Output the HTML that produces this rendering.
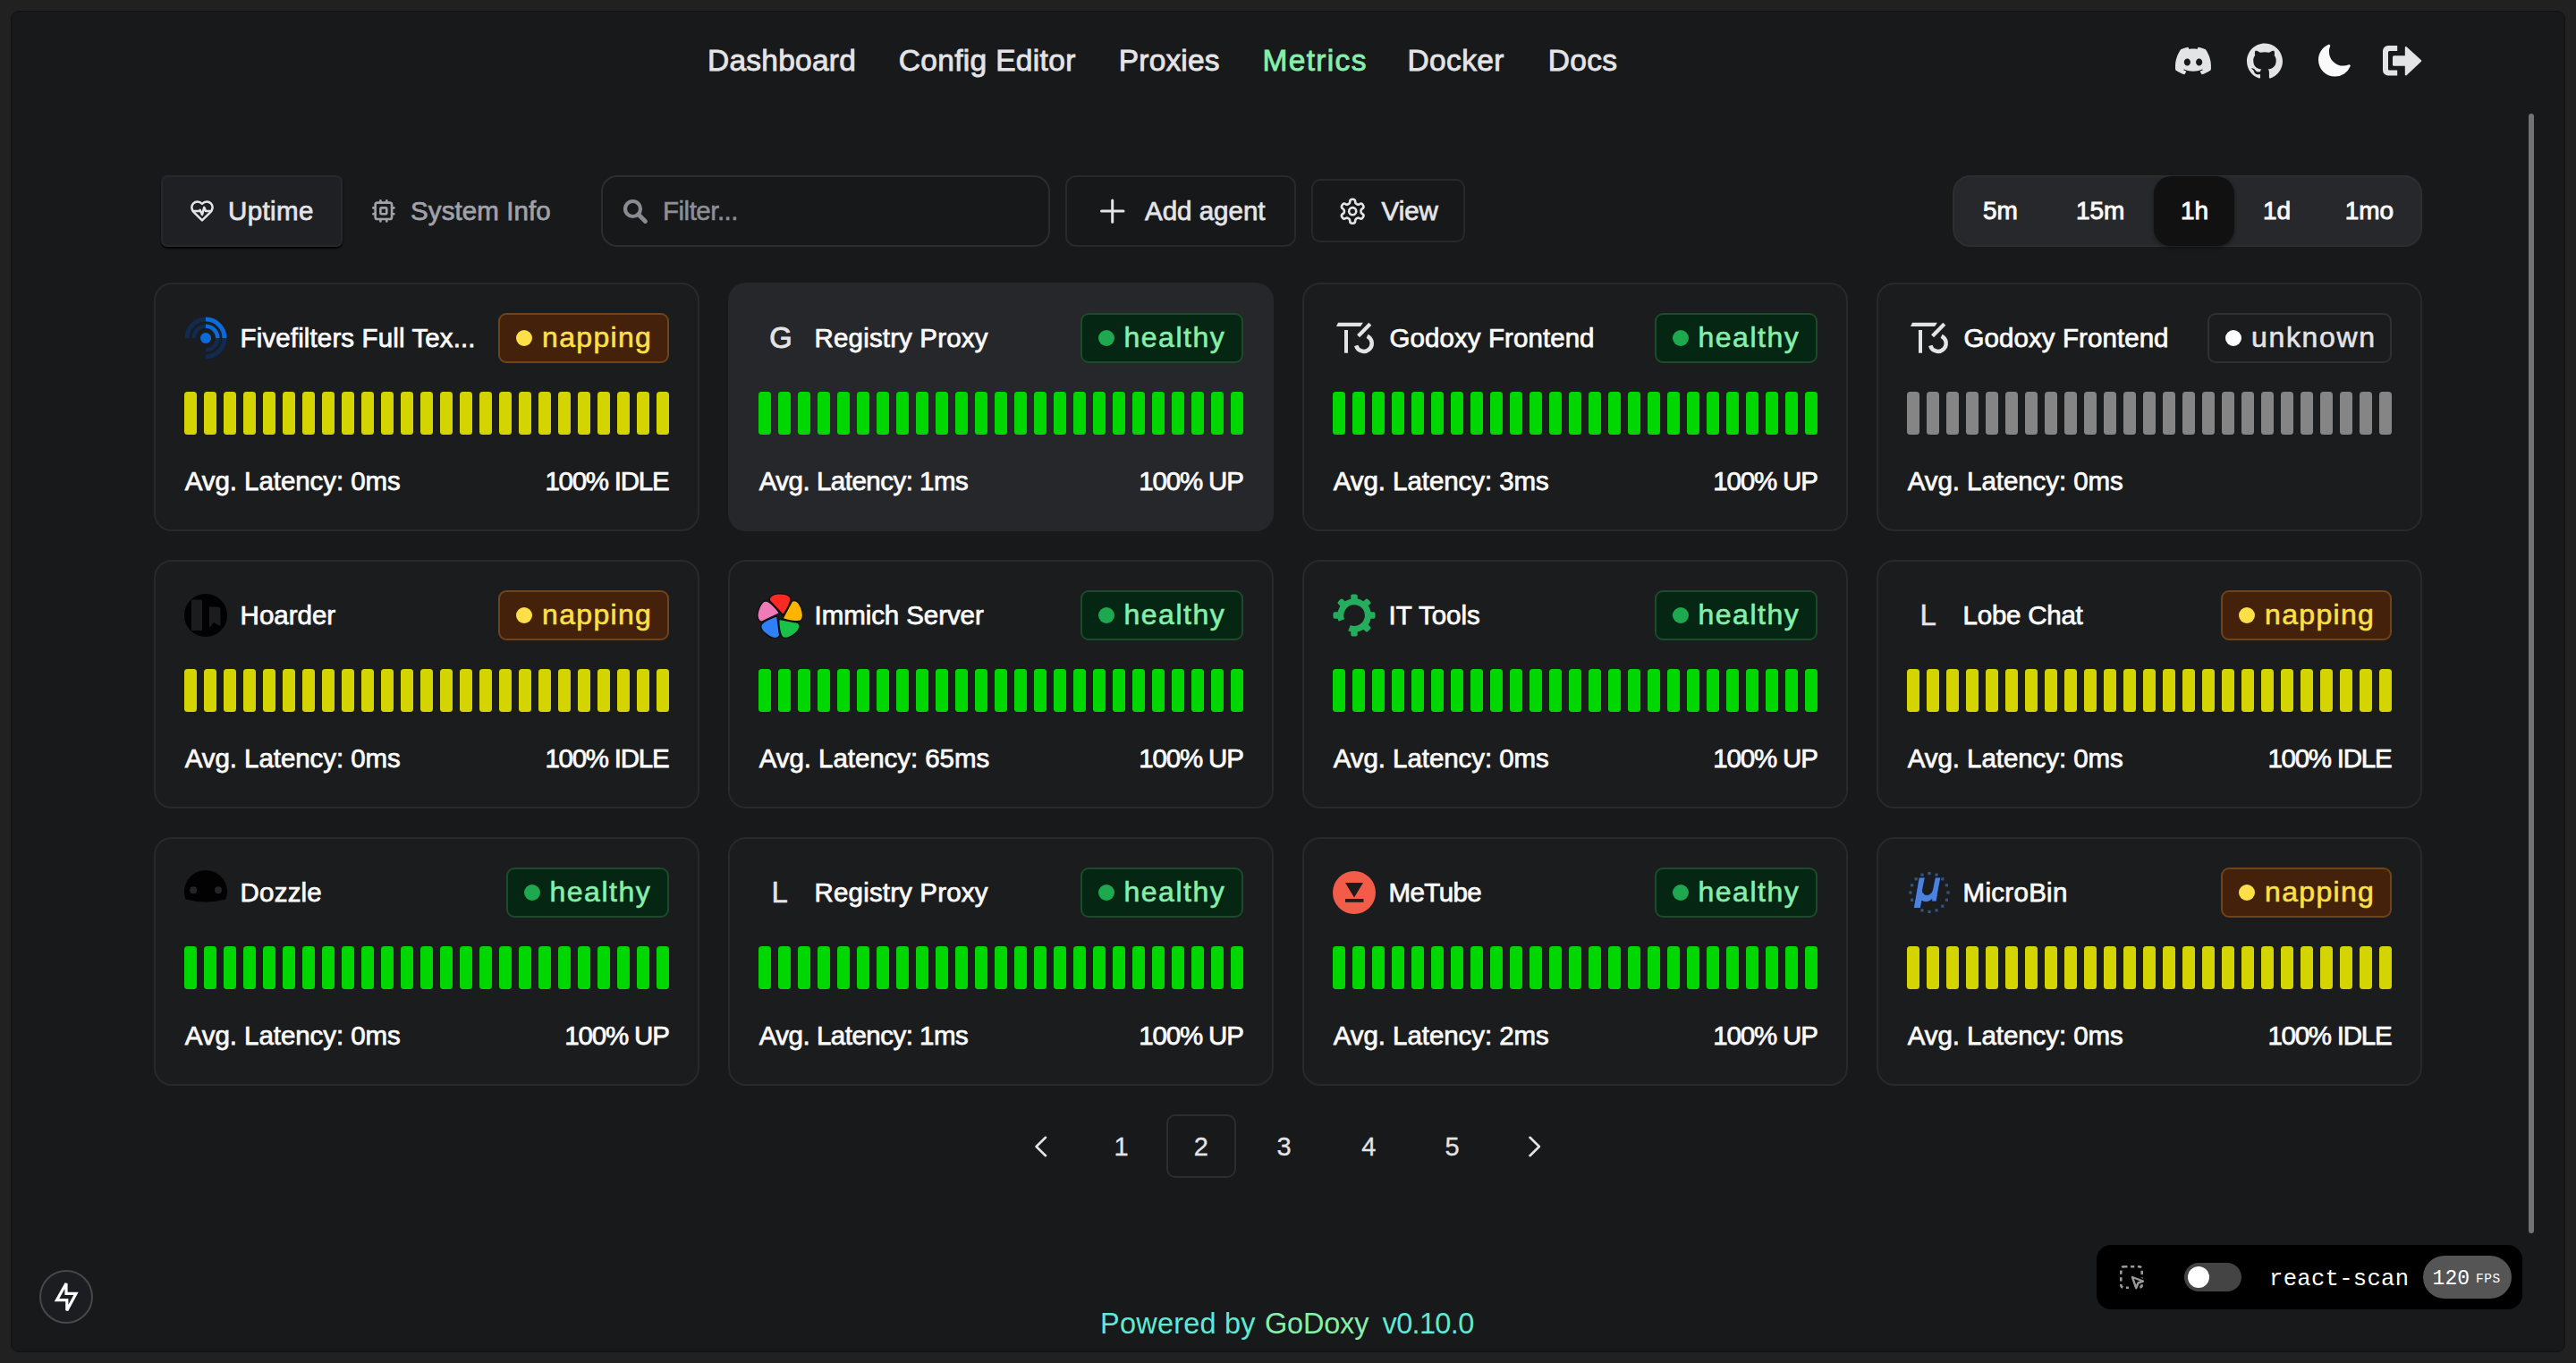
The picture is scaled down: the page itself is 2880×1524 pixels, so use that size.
<!DOCTYPE html><html><head><meta charset='utf-8'><style>
html,body{margin:0;padding:0;width:2880px;height:1524px;overflow:hidden;background:#212121;font-family:"Liberation Sans",sans-serif;}
.t{position:absolute;line-height:1;white-space:nowrap;}
.a{position:absolute;box-sizing:border-box;}
svg{position:absolute;overflow:visible;}

</style></head><body>
<div class='a' style='left:12px;top:12px;width:2856px;height:1500px;background:#18191b;border-radius:9px;box-shadow:inset 0 0 2px 1px rgba(0,0,0,0.3);'></div>
<div class='a' style='left:180px;top:196px;width:203px;height:80px;background:#1f2023;border:2px solid #27282b;border-radius:7px;box-shadow:0 2px 2px rgba(0,0,0,0.85);'></div>
<div class='a' style='left:672px;top:196px;width:502px;height:80px;background:#17181a;border:2px solid #2c2d30;border-radius:18px;'></div>
<div class='a' style='left:1191px;top:196px;width:258px;height:80px;background:#17181a;border:2px solid #29292c;border-radius:12px;'></div>
<div class='a' style='left:1466px;top:200px;width:172px;height:71px;background:#17181a;border:2px solid #28282b;border-radius:10px;'></div>
<div class='a' style='left:2183px;top:196px;width:525px;height:80px;background:#27282b;border:2px solid #2d2e31;border-radius:20px;'></div>
<div class='a' style='left:2408px;top:197px;width:90px;height:78px;background:#111112;border-radius:20px;box-shadow:0 2px 4px rgba(0,0,0,0.4);'></div>
<div class='a' style='left:172px;top:316px;width:610px;height:278px;background:#1b1c1e;border:2px solid #28292c;border-radius:20px;'></div>
<svg style='left:206px;top:438px' width='542' height='48' viewBox='0 0 542 48'><rect x='0' y='0' width='14' height='48' rx='3.5' fill='#d4d400'/><rect x='22' y='0' width='14' height='48' rx='3.5' fill='#d4d400'/><rect x='44' y='0' width='14' height='48' rx='3.5' fill='#d4d400'/><rect x='66' y='0' width='14' height='48' rx='3.5' fill='#d4d400'/><rect x='88' y='0' width='14' height='48' rx='3.5' fill='#d4d400'/><rect x='110' y='0' width='14' height='48' rx='3.5' fill='#d4d400'/><rect x='132' y='0' width='14' height='48' rx='3.5' fill='#d4d400'/><rect x='154' y='0' width='14' height='48' rx='3.5' fill='#d4d400'/><rect x='176' y='0' width='14' height='48' rx='3.5' fill='#d4d400'/><rect x='198' y='0' width='14' height='48' rx='3.5' fill='#d4d400'/><rect x='220' y='0' width='14' height='48' rx='3.5' fill='#d4d400'/><rect x='242' y='0' width='14' height='48' rx='3.5' fill='#d4d400'/><rect x='264' y='0' width='14' height='48' rx='3.5' fill='#d4d400'/><rect x='286' y='0' width='14' height='48' rx='3.5' fill='#d4d400'/><rect x='308' y='0' width='14' height='48' rx='3.5' fill='#d4d400'/><rect x='330' y='0' width='14' height='48' rx='3.5' fill='#d4d400'/><rect x='352' y='0' width='14' height='48' rx='3.5' fill='#d4d400'/><rect x='374' y='0' width='14' height='48' rx='3.5' fill='#d4d400'/><rect x='396' y='0' width='14' height='48' rx='3.5' fill='#d4d400'/><rect x='418' y='0' width='14' height='48' rx='3.5' fill='#d4d400'/><rect x='440' y='0' width='14' height='48' rx='3.5' fill='#d4d400'/><rect x='462' y='0' width='14' height='48' rx='3.5' fill='#d4d400'/><rect x='484' y='0' width='14' height='48' rx='3.5' fill='#d4d400'/><rect x='506' y='0' width='14' height='48' rx='3.5' fill='#d4d400'/><rect x='528' y='0' width='14' height='48' rx='3.5' fill='#d4d400'/></svg>
<div class='a' style='left:557px;top:350px;width:191px;height:56px;background:#43210a;border:2px solid #70431a;border-radius:9px;'></div>
<div class='a' style='left:577px;top:369px;width:18px;height:18px;background:#fde047;border-radius:50%;'></div>
<svg style='left:206px;top:354px;' width='48' height='48' viewBox='0 0 48 48'><circle cx='24' cy='24' r='6' fill='#0c6bdb'/><g fill='none' stroke-width='4.6'><path d='M24 10.7 A13.3 13.3 0 0 1 37.3 24' stroke='#0c6bdb'/><path d='M10.7 24 A13.3 13.3 0 0 1 24 10.7' stroke='#132a50'/><path d='M37.3 24 A13.3 13.3 0 0 1 24 37.3' stroke='#132a50'/></g><g fill='none' stroke-width='5'><path d='M24 3 A21 21 0 0 1 45 24' stroke='#0c6bdb'/><path d='M3 24 A21 21 0 0 1 24 3' stroke='#132a50'/><path d='M45 24 A21 21 0 0 1 24 45' stroke='#132a50'/></g></svg>
<div class='a' style='left:814px;top:316px;width:610px;height:278px;background:#26272b;border-radius:20px;'></div>
<svg style='left:848px;top:438px' width='542' height='48' viewBox='0 0 542 48'><rect x='0' y='0' width='14' height='48' rx='3.5' fill='#00d600'/><rect x='22' y='0' width='14' height='48' rx='3.5' fill='#00d600'/><rect x='44' y='0' width='14' height='48' rx='3.5' fill='#00d600'/><rect x='66' y='0' width='14' height='48' rx='3.5' fill='#00d600'/><rect x='88' y='0' width='14' height='48' rx='3.5' fill='#00d600'/><rect x='110' y='0' width='14' height='48' rx='3.5' fill='#00d600'/><rect x='132' y='0' width='14' height='48' rx='3.5' fill='#00d600'/><rect x='154' y='0' width='14' height='48' rx='3.5' fill='#00d600'/><rect x='176' y='0' width='14' height='48' rx='3.5' fill='#00d600'/><rect x='198' y='0' width='14' height='48' rx='3.5' fill='#00d600'/><rect x='220' y='0' width='14' height='48' rx='3.5' fill='#00d600'/><rect x='242' y='0' width='14' height='48' rx='3.5' fill='#00d600'/><rect x='264' y='0' width='14' height='48' rx='3.5' fill='#00d600'/><rect x='286' y='0' width='14' height='48' rx='3.5' fill='#00d600'/><rect x='308' y='0' width='14' height='48' rx='3.5' fill='#00d600'/><rect x='330' y='0' width='14' height='48' rx='3.5' fill='#00d600'/><rect x='352' y='0' width='14' height='48' rx='3.5' fill='#00d600'/><rect x='374' y='0' width='14' height='48' rx='3.5' fill='#00d600'/><rect x='396' y='0' width='14' height='48' rx='3.5' fill='#00d600'/><rect x='418' y='0' width='14' height='48' rx='3.5' fill='#00d600'/><rect x='440' y='0' width='14' height='48' rx='3.5' fill='#00d600'/><rect x='462' y='0' width='14' height='48' rx='3.5' fill='#00d600'/><rect x='484' y='0' width='14' height='48' rx='3.5' fill='#00d600'/><rect x='506' y='0' width='14' height='48' rx='3.5' fill='#00d600'/><rect x='528' y='0' width='14' height='48' rx='3.5' fill='#00d600'/></svg>
<div class='a' style='left:1207.5px;top:350px;width:182.5px;height:56px;background:#042613;border:2px solid #1d4a2b;border-radius:9px;'></div>
<div class='a' style='left:1227.5px;top:369px;width:18px;height:18px;background:#1ea84f;border-radius:50%;'></div>
<div class='t' style='left:860.2px;top:361.81705px;font-size:32.7px;color:#e4e4e7;-webkit-text-stroke:0.9px #e4e4e7'>G</div>
<div class='a' style='left:1456px;top:316px;width:610px;height:278px;background:#1b1c1e;border:2px solid #28292c;border-radius:20px;'></div>
<svg style='left:1490px;top:438px' width='542' height='48' viewBox='0 0 542 48'><rect x='0' y='0' width='14' height='48' rx='3.5' fill='#00d600'/><rect x='22' y='0' width='14' height='48' rx='3.5' fill='#00d600'/><rect x='44' y='0' width='14' height='48' rx='3.5' fill='#00d600'/><rect x='66' y='0' width='14' height='48' rx='3.5' fill='#00d600'/><rect x='88' y='0' width='14' height='48' rx='3.5' fill='#00d600'/><rect x='110' y='0' width='14' height='48' rx='3.5' fill='#00d600'/><rect x='132' y='0' width='14' height='48' rx='3.5' fill='#00d600'/><rect x='154' y='0' width='14' height='48' rx='3.5' fill='#00d600'/><rect x='176' y='0' width='14' height='48' rx='3.5' fill='#00d600'/><rect x='198' y='0' width='14' height='48' rx='3.5' fill='#00d600'/><rect x='220' y='0' width='14' height='48' rx='3.5' fill='#00d600'/><rect x='242' y='0' width='14' height='48' rx='3.5' fill='#00d600'/><rect x='264' y='0' width='14' height='48' rx='3.5' fill='#00d600'/><rect x='286' y='0' width='14' height='48' rx='3.5' fill='#00d600'/><rect x='308' y='0' width='14' height='48' rx='3.5' fill='#00d600'/><rect x='330' y='0' width='14' height='48' rx='3.5' fill='#00d600'/><rect x='352' y='0' width='14' height='48' rx='3.5' fill='#00d600'/><rect x='374' y='0' width='14' height='48' rx='3.5' fill='#00d600'/><rect x='396' y='0' width='14' height='48' rx='3.5' fill='#00d600'/><rect x='418' y='0' width='14' height='48' rx='3.5' fill='#00d600'/><rect x='440' y='0' width='14' height='48' rx='3.5' fill='#00d600'/><rect x='462' y='0' width='14' height='48' rx='3.5' fill='#00d600'/><rect x='484' y='0' width='14' height='48' rx='3.5' fill='#00d600'/><rect x='506' y='0' width='14' height='48' rx='3.5' fill='#00d600'/><rect x='528' y='0' width='14' height='48' rx='3.5' fill='#00d600'/></svg>
<div class='a' style='left:1849.5px;top:350px;width:182.5px;height:56px;background:#042613;border:2px solid #1d4a2b;border-radius:9px;'></div>
<div class='a' style='left:1869.5px;top:369px;width:18px;height:18px;background:#1ea84f;border-radius:50%;'></div>
<svg style='left:1490px;top:354px;' width='48' height='48' viewBox='0 0 48 48'><path d='M6 6.8 H33.9 L31.1 11 H4 Z' fill='#e4e4e7'/><rect x='13' y='15' width='4' height='25.7' fill='#e4e4e7'/><path d='M41.8 8.3 L28.6 21.7' stroke='#e4e4e7' stroke-width='4.2'/><path d='M38.56 21.9 A8.9 8.9 0 1 1 26.2 32.3' fill='none' stroke='#e4e4e7' stroke-width='4.5'/></svg>
<div class='a' style='left:2098px;top:316px;width:610px;height:278px;background:#1b1c1e;border:2px solid #28292c;border-radius:20px;'></div>
<svg style='left:2132px;top:438px' width='542' height='48' viewBox='0 0 542 48'><rect x='0' y='0' width='14' height='48' rx='3.5' fill='#858585'/><rect x='22' y='0' width='14' height='48' rx='3.5' fill='#858585'/><rect x='44' y='0' width='14' height='48' rx='3.5' fill='#858585'/><rect x='66' y='0' width='14' height='48' rx='3.5' fill='#858585'/><rect x='88' y='0' width='14' height='48' rx='3.5' fill='#858585'/><rect x='110' y='0' width='14' height='48' rx='3.5' fill='#858585'/><rect x='132' y='0' width='14' height='48' rx='3.5' fill='#858585'/><rect x='154' y='0' width='14' height='48' rx='3.5' fill='#858585'/><rect x='176' y='0' width='14' height='48' rx='3.5' fill='#858585'/><rect x='198' y='0' width='14' height='48' rx='3.5' fill='#858585'/><rect x='220' y='0' width='14' height='48' rx='3.5' fill='#858585'/><rect x='242' y='0' width='14' height='48' rx='3.5' fill='#858585'/><rect x='264' y='0' width='14' height='48' rx='3.5' fill='#858585'/><rect x='286' y='0' width='14' height='48' rx='3.5' fill='#858585'/><rect x='308' y='0' width='14' height='48' rx='3.5' fill='#858585'/><rect x='330' y='0' width='14' height='48' rx='3.5' fill='#858585'/><rect x='352' y='0' width='14' height='48' rx='3.5' fill='#858585'/><rect x='374' y='0' width='14' height='48' rx='3.5' fill='#858585'/><rect x='396' y='0' width='14' height='48' rx='3.5' fill='#858585'/><rect x='418' y='0' width='14' height='48' rx='3.5' fill='#858585'/><rect x='440' y='0' width='14' height='48' rx='3.5' fill='#858585'/><rect x='462' y='0' width='14' height='48' rx='3.5' fill='#858585'/><rect x='484' y='0' width='14' height='48' rx='3.5' fill='#858585'/><rect x='506' y='0' width='14' height='48' rx='3.5' fill='#858585'/><rect x='528' y='0' width='14' height='48' rx='3.5' fill='#858585'/></svg>
<div class='a' style='left:2468px;top:350px;width:206px;height:56px;background:#1b1c1e;border:2px solid #2f3033;border-radius:9px;'></div>
<div class='a' style='left:2488px;top:369px;width:18px;height:18px;background:#ffffff;border-radius:50%;'></div>
<svg style='left:2132px;top:354px;' width='48' height='48' viewBox='0 0 48 48'><path d='M6 6.8 H33.9 L31.1 11 H4 Z' fill='#e4e4e7'/><rect x='13' y='15' width='4' height='25.7' fill='#e4e4e7'/><path d='M41.8 8.3 L28.6 21.7' stroke='#e4e4e7' stroke-width='4.2'/><path d='M38.56 21.9 A8.9 8.9 0 1 1 26.2 32.3' fill='none' stroke='#e4e4e7' stroke-width='4.5'/></svg>
<div class='a' style='left:172px;top:626px;width:610px;height:278px;background:#1b1c1e;border:2px solid #28292c;border-radius:20px;'></div>
<svg style='left:206px;top:748px' width='542' height='48' viewBox='0 0 542 48'><rect x='0' y='0' width='14' height='48' rx='3.5' fill='#d4d400'/><rect x='22' y='0' width='14' height='48' rx='3.5' fill='#d4d400'/><rect x='44' y='0' width='14' height='48' rx='3.5' fill='#d4d400'/><rect x='66' y='0' width='14' height='48' rx='3.5' fill='#d4d400'/><rect x='88' y='0' width='14' height='48' rx='3.5' fill='#d4d400'/><rect x='110' y='0' width='14' height='48' rx='3.5' fill='#d4d400'/><rect x='132' y='0' width='14' height='48' rx='3.5' fill='#d4d400'/><rect x='154' y='0' width='14' height='48' rx='3.5' fill='#d4d400'/><rect x='176' y='0' width='14' height='48' rx='3.5' fill='#d4d400'/><rect x='198' y='0' width='14' height='48' rx='3.5' fill='#d4d400'/><rect x='220' y='0' width='14' height='48' rx='3.5' fill='#d4d400'/><rect x='242' y='0' width='14' height='48' rx='3.5' fill='#d4d400'/><rect x='264' y='0' width='14' height='48' rx='3.5' fill='#d4d400'/><rect x='286' y='0' width='14' height='48' rx='3.5' fill='#d4d400'/><rect x='308' y='0' width='14' height='48' rx='3.5' fill='#d4d400'/><rect x='330' y='0' width='14' height='48' rx='3.5' fill='#d4d400'/><rect x='352' y='0' width='14' height='48' rx='3.5' fill='#d4d400'/><rect x='374' y='0' width='14' height='48' rx='3.5' fill='#d4d400'/><rect x='396' y='0' width='14' height='48' rx='3.5' fill='#d4d400'/><rect x='418' y='0' width='14' height='48' rx='3.5' fill='#d4d400'/><rect x='440' y='0' width='14' height='48' rx='3.5' fill='#d4d400'/><rect x='462' y='0' width='14' height='48' rx='3.5' fill='#d4d400'/><rect x='484' y='0' width='14' height='48' rx='3.5' fill='#d4d400'/><rect x='506' y='0' width='14' height='48' rx='3.5' fill='#d4d400'/><rect x='528' y='0' width='14' height='48' rx='3.5' fill='#d4d400'/></svg>
<div class='a' style='left:557px;top:660px;width:191px;height:56px;background:#43210a;border:2px solid #70431a;border-radius:9px;'></div>
<div class='a' style='left:577px;top:679px;width:18px;height:18px;background:#fde047;border-radius:50%;'></div>
<svg style='left:206px;top:664px;' width='48' height='48' viewBox='0 0 48 48'><circle cx='24' cy='24' r='24' fill='#020202'/><rect x='8' y='6.5' width='12' height='34.5' rx='1' fill='#1b1c1e'/><path d='M28 14.5 H37 A3.4 3.4 0 0 1 40.4 18 V36 L33 32 L28 38 Z' fill='#1b1c1e'/></svg>
<div class='a' style='left:814px;top:626px;width:610px;height:278px;background:#1b1c1e;border:2px solid #28292c;border-radius:20px;'></div>
<svg style='left:848px;top:748px' width='542' height='48' viewBox='0 0 542 48'><rect x='0' y='0' width='14' height='48' rx='3.5' fill='#00d600'/><rect x='22' y='0' width='14' height='48' rx='3.5' fill='#00d600'/><rect x='44' y='0' width='14' height='48' rx='3.5' fill='#00d600'/><rect x='66' y='0' width='14' height='48' rx='3.5' fill='#00d600'/><rect x='88' y='0' width='14' height='48' rx='3.5' fill='#00d600'/><rect x='110' y='0' width='14' height='48' rx='3.5' fill='#00d600'/><rect x='132' y='0' width='14' height='48' rx='3.5' fill='#00d600'/><rect x='154' y='0' width='14' height='48' rx='3.5' fill='#00d600'/><rect x='176' y='0' width='14' height='48' rx='3.5' fill='#00d600'/><rect x='198' y='0' width='14' height='48' rx='3.5' fill='#00d600'/><rect x='220' y='0' width='14' height='48' rx='3.5' fill='#00d600'/><rect x='242' y='0' width='14' height='48' rx='3.5' fill='#00d600'/><rect x='264' y='0' width='14' height='48' rx='3.5' fill='#00d600'/><rect x='286' y='0' width='14' height='48' rx='3.5' fill='#00d600'/><rect x='308' y='0' width='14' height='48' rx='3.5' fill='#00d600'/><rect x='330' y='0' width='14' height='48' rx='3.5' fill='#00d600'/><rect x='352' y='0' width='14' height='48' rx='3.5' fill='#00d600'/><rect x='374' y='0' width='14' height='48' rx='3.5' fill='#00d600'/><rect x='396' y='0' width='14' height='48' rx='3.5' fill='#00d600'/><rect x='418' y='0' width='14' height='48' rx='3.5' fill='#00d600'/><rect x='440' y='0' width='14' height='48' rx='3.5' fill='#00d600'/><rect x='462' y='0' width='14' height='48' rx='3.5' fill='#00d600'/><rect x='484' y='0' width='14' height='48' rx='3.5' fill='#00d600'/><rect x='506' y='0' width='14' height='48' rx='3.5' fill='#00d600'/><rect x='528' y='0' width='14' height='48' rx='3.5' fill='#00d600'/></svg>
<div class='a' style='left:1207.5px;top:660px;width:182.5px;height:56px;background:#042613;border:2px solid #1d4a2b;border-radius:9px;'></div>
<div class='a' style='left:1227.5px;top:679px;width:18px;height:18px;background:#1ea84f;border-radius:50%;'></div>
<svg style='left:848px;top:664px;' width='48' height='48' viewBox='0 0 48 48'><path transform='translate(24.3 25.2) rotate(0) scale(1.09) translate(-24.3 -25.2)' d='M27.2 23.6 L13.3 9 C 12.3 5.5 16 2.3 22 2 C 28 1.8 33.6 2.8 34.9 6.4 C 35.6 10 31.2 18.5 27.2 23.6 Z' fill='#fa2921' stroke='#0e0e10' stroke-width='1.2' stroke-linejoin='round'/><path transform='translate(24.3 25.2) rotate(72) scale(1.09) translate(-24.3 -25.2)' d='M27.2 23.6 L13.3 9 C 12.3 5.5 16 2.3 22 2 C 28 1.8 33.6 2.8 34.9 6.4 C 35.6 10 31.2 18.5 27.2 23.6 Z' fill='#ffb400' stroke='#0e0e10' stroke-width='1.2' stroke-linejoin='round'/><path transform='translate(24.3 25.2) rotate(144) scale(1.09) translate(-24.3 -25.2)' d='M27.2 23.6 L13.3 9 C 12.3 5.5 16 2.3 22 2 C 28 1.8 33.6 2.8 34.9 6.4 C 35.6 10 31.2 18.5 27.2 23.6 Z' fill='#18c249' stroke='#0e0e10' stroke-width='1.2' stroke-linejoin='round'/><path transform='translate(24.3 25.2) rotate(216) scale(1.09) translate(-24.3 -25.2)' d='M27.2 23.6 L13.3 9 C 12.3 5.5 16 2.3 22 2 C 28 1.8 33.6 2.8 34.9 6.4 C 35.6 10 31.2 18.5 27.2 23.6 Z' fill='#2f80f7' stroke='#0e0e10' stroke-width='1.2' stroke-linejoin='round'/><path transform='translate(24.3 25.2) rotate(288) scale(1.09) translate(-24.3 -25.2)' d='M27.2 23.6 L13.3 9 C 12.3 5.5 16 2.3 22 2 C 28 1.8 33.6 2.8 34.9 6.4 C 35.6 10 31.2 18.5 27.2 23.6 Z' fill='#ee7bb8' stroke='#0e0e10' stroke-width='1.2' stroke-linejoin='round'/></svg>
<div class='a' style='left:1456px;top:626px;width:610px;height:278px;background:#1b1c1e;border:2px solid #28292c;border-radius:20px;'></div>
<svg style='left:1490px;top:748px' width='542' height='48' viewBox='0 0 542 48'><rect x='0' y='0' width='14' height='48' rx='3.5' fill='#00d600'/><rect x='22' y='0' width='14' height='48' rx='3.5' fill='#00d600'/><rect x='44' y='0' width='14' height='48' rx='3.5' fill='#00d600'/><rect x='66' y='0' width='14' height='48' rx='3.5' fill='#00d600'/><rect x='88' y='0' width='14' height='48' rx='3.5' fill='#00d600'/><rect x='110' y='0' width='14' height='48' rx='3.5' fill='#00d600'/><rect x='132' y='0' width='14' height='48' rx='3.5' fill='#00d600'/><rect x='154' y='0' width='14' height='48' rx='3.5' fill='#00d600'/><rect x='176' y='0' width='14' height='48' rx='3.5' fill='#00d600'/><rect x='198' y='0' width='14' height='48' rx='3.5' fill='#00d600'/><rect x='220' y='0' width='14' height='48' rx='3.5' fill='#00d600'/><rect x='242' y='0' width='14' height='48' rx='3.5' fill='#00d600'/><rect x='264' y='0' width='14' height='48' rx='3.5' fill='#00d600'/><rect x='286' y='0' width='14' height='48' rx='3.5' fill='#00d600'/><rect x='308' y='0' width='14' height='48' rx='3.5' fill='#00d600'/><rect x='330' y='0' width='14' height='48' rx='3.5' fill='#00d600'/><rect x='352' y='0' width='14' height='48' rx='3.5' fill='#00d600'/><rect x='374' y='0' width='14' height='48' rx='3.5' fill='#00d600'/><rect x='396' y='0' width='14' height='48' rx='3.5' fill='#00d600'/><rect x='418' y='0' width='14' height='48' rx='3.5' fill='#00d600'/><rect x='440' y='0' width='14' height='48' rx='3.5' fill='#00d600'/><rect x='462' y='0' width='14' height='48' rx='3.5' fill='#00d600'/><rect x='484' y='0' width='14' height='48' rx='3.5' fill='#00d600'/><rect x='506' y='0' width='14' height='48' rx='3.5' fill='#00d600'/><rect x='528' y='0' width='14' height='48' rx='3.5' fill='#00d600'/></svg>
<div class='a' style='left:1849.5px;top:660px;width:182.5px;height:56px;background:#042613;border:2px solid #1d4a2b;border-radius:9px;'></div>
<div class='a' style='left:1869.5px;top:679px;width:18px;height:18px;background:#1ea84f;border-radius:50%;'></div>
<svg style='left:1490px;top:664px;' width='48' height='48' viewBox='0 0 48 48'><rect x='20.3' y='0.5' width='7.4' height='9' rx='1.8' transform='rotate(0 24 24)' fill='#23ad5c'/><rect x='20.3' y='0.5' width='7.4' height='9' rx='1.8' transform='rotate(45 24 24)' fill='#23ad5c'/><rect x='20.3' y='0.5' width='7.4' height='9' rx='1.8' transform='rotate(90 24 24)' fill='#23ad5c'/><rect x='20.3' y='0.5' width='7.4' height='9' rx='1.8' transform='rotate(135 24 24)' fill='#23ad5c'/><rect x='20.3' y='0.5' width='7.4' height='9' rx='1.8' transform='rotate(180 24 24)' fill='#23ad5c'/><rect x='20.3' y='0.5' width='7.4' height='9' rx='1.8' transform='rotate(270 24 24)' fill='#23ad5c'/><rect x='20.3' y='0.5' width='7.4' height='9' rx='1.8' transform='rotate(315 24 24)' fill='#23ad5c'/><path d='M9.8 29.5 A15.3 15.3 0 1 1 18.5 38.3' fill='none' stroke='#23ad5c' stroke-width='7'/></svg>
<div class='a' style='left:2098px;top:626px;width:610px;height:278px;background:#1b1c1e;border:2px solid #28292c;border-radius:20px;'></div>
<svg style='left:2132px;top:748px' width='542' height='48' viewBox='0 0 542 48'><rect x='0' y='0' width='14' height='48' rx='3.5' fill='#d4d400'/><rect x='22' y='0' width='14' height='48' rx='3.5' fill='#d4d400'/><rect x='44' y='0' width='14' height='48' rx='3.5' fill='#d4d400'/><rect x='66' y='0' width='14' height='48' rx='3.5' fill='#d4d400'/><rect x='88' y='0' width='14' height='48' rx='3.5' fill='#d4d400'/><rect x='110' y='0' width='14' height='48' rx='3.5' fill='#d4d400'/><rect x='132' y='0' width='14' height='48' rx='3.5' fill='#d4d400'/><rect x='154' y='0' width='14' height='48' rx='3.5' fill='#d4d400'/><rect x='176' y='0' width='14' height='48' rx='3.5' fill='#d4d400'/><rect x='198' y='0' width='14' height='48' rx='3.5' fill='#d4d400'/><rect x='220' y='0' width='14' height='48' rx='3.5' fill='#d4d400'/><rect x='242' y='0' width='14' height='48' rx='3.5' fill='#d4d400'/><rect x='264' y='0' width='14' height='48' rx='3.5' fill='#d4d400'/><rect x='286' y='0' width='14' height='48' rx='3.5' fill='#d4d400'/><rect x='308' y='0' width='14' height='48' rx='3.5' fill='#d4d400'/><rect x='330' y='0' width='14' height='48' rx='3.5' fill='#d4d400'/><rect x='352' y='0' width='14' height='48' rx='3.5' fill='#d4d400'/><rect x='374' y='0' width='14' height='48' rx='3.5' fill='#d4d400'/><rect x='396' y='0' width='14' height='48' rx='3.5' fill='#d4d400'/><rect x='418' y='0' width='14' height='48' rx='3.5' fill='#d4d400'/><rect x='440' y='0' width='14' height='48' rx='3.5' fill='#d4d400'/><rect x='462' y='0' width='14' height='48' rx='3.5' fill='#d4d400'/><rect x='484' y='0' width='14' height='48' rx='3.5' fill='#d4d400'/><rect x='506' y='0' width='14' height='48' rx='3.5' fill='#d4d400'/><rect x='528' y='0' width='14' height='48' rx='3.5' fill='#d4d400'/></svg>
<div class='a' style='left:2483px;top:660px;width:191px;height:56px;background:#43210a;border:2px solid #70431a;border-radius:9px;'></div>
<div class='a' style='left:2503px;top:679px;width:18px;height:18px;background:#fde047;border-radius:50%;'></div>
<div class='t' style='left:2146.4px;top:670.7695px;font-size:33px;color:#e4e4e7;-webkit-text-stroke:0.5px #e4e4e7'>L</div>
<div class='a' style='left:172px;top:936px;width:610px;height:278px;background:#1b1c1e;border:2px solid #28292c;border-radius:20px;'></div>
<svg style='left:206px;top:1058px' width='542' height='48' viewBox='0 0 542 48'><rect x='0' y='0' width='14' height='48' rx='3.5' fill='#00d600'/><rect x='22' y='0' width='14' height='48' rx='3.5' fill='#00d600'/><rect x='44' y='0' width='14' height='48' rx='3.5' fill='#00d600'/><rect x='66' y='0' width='14' height='48' rx='3.5' fill='#00d600'/><rect x='88' y='0' width='14' height='48' rx='3.5' fill='#00d600'/><rect x='110' y='0' width='14' height='48' rx='3.5' fill='#00d600'/><rect x='132' y='0' width='14' height='48' rx='3.5' fill='#00d600'/><rect x='154' y='0' width='14' height='48' rx='3.5' fill='#00d600'/><rect x='176' y='0' width='14' height='48' rx='3.5' fill='#00d600'/><rect x='198' y='0' width='14' height='48' rx='3.5' fill='#00d600'/><rect x='220' y='0' width='14' height='48' rx='3.5' fill='#00d600'/><rect x='242' y='0' width='14' height='48' rx='3.5' fill='#00d600'/><rect x='264' y='0' width='14' height='48' rx='3.5' fill='#00d600'/><rect x='286' y='0' width='14' height='48' rx='3.5' fill='#00d600'/><rect x='308' y='0' width='14' height='48' rx='3.5' fill='#00d600'/><rect x='330' y='0' width='14' height='48' rx='3.5' fill='#00d600'/><rect x='352' y='0' width='14' height='48' rx='3.5' fill='#00d600'/><rect x='374' y='0' width='14' height='48' rx='3.5' fill='#00d600'/><rect x='396' y='0' width='14' height='48' rx='3.5' fill='#00d600'/><rect x='418' y='0' width='14' height='48' rx='3.5' fill='#00d600'/><rect x='440' y='0' width='14' height='48' rx='3.5' fill='#00d600'/><rect x='462' y='0' width='14' height='48' rx='3.5' fill='#00d600'/><rect x='484' y='0' width='14' height='48' rx='3.5' fill='#00d600'/><rect x='506' y='0' width='14' height='48' rx='3.5' fill='#00d600'/><rect x='528' y='0' width='14' height='48' rx='3.5' fill='#00d600'/></svg>
<div class='a' style='left:565.5px;top:970px;width:182.5px;height:56px;background:#042613;border:2px solid #1d4a2b;border-radius:9px;'></div>
<div class='a' style='left:585.5px;top:989px;width:18px;height:18px;background:#1ea84f;border-radius:50%;'></div>
<svg style='left:206px;top:974px;' width='48' height='48' viewBox='0 0 48 48'><path d='M1.6 31.5 A24 24 0 1 1 46.4 31.5 Q24 37.5 1.6 31.5 Z' fill='#020202'/><circle cx='10.2' cy='21.2' r='4' fill='#242527'/><circle cx='38' cy='21.2' r='4' fill='#242527'/></svg>
<div class='a' style='left:814px;top:936px;width:610px;height:278px;background:#1b1c1e;border:2px solid #28292c;border-radius:20px;'></div>
<svg style='left:848px;top:1058px' width='542' height='48' viewBox='0 0 542 48'><rect x='0' y='0' width='14' height='48' rx='3.5' fill='#00d600'/><rect x='22' y='0' width='14' height='48' rx='3.5' fill='#00d600'/><rect x='44' y='0' width='14' height='48' rx='3.5' fill='#00d600'/><rect x='66' y='0' width='14' height='48' rx='3.5' fill='#00d600'/><rect x='88' y='0' width='14' height='48' rx='3.5' fill='#00d600'/><rect x='110' y='0' width='14' height='48' rx='3.5' fill='#00d600'/><rect x='132' y='0' width='14' height='48' rx='3.5' fill='#00d600'/><rect x='154' y='0' width='14' height='48' rx='3.5' fill='#00d600'/><rect x='176' y='0' width='14' height='48' rx='3.5' fill='#00d600'/><rect x='198' y='0' width='14' height='48' rx='3.5' fill='#00d600'/><rect x='220' y='0' width='14' height='48' rx='3.5' fill='#00d600'/><rect x='242' y='0' width='14' height='48' rx='3.5' fill='#00d600'/><rect x='264' y='0' width='14' height='48' rx='3.5' fill='#00d600'/><rect x='286' y='0' width='14' height='48' rx='3.5' fill='#00d600'/><rect x='308' y='0' width='14' height='48' rx='3.5' fill='#00d600'/><rect x='330' y='0' width='14' height='48' rx='3.5' fill='#00d600'/><rect x='352' y='0' width='14' height='48' rx='3.5' fill='#00d600'/><rect x='374' y='0' width='14' height='48' rx='3.5' fill='#00d600'/><rect x='396' y='0' width='14' height='48' rx='3.5' fill='#00d600'/><rect x='418' y='0' width='14' height='48' rx='3.5' fill='#00d600'/><rect x='440' y='0' width='14' height='48' rx='3.5' fill='#00d600'/><rect x='462' y='0' width='14' height='48' rx='3.5' fill='#00d600'/><rect x='484' y='0' width='14' height='48' rx='3.5' fill='#00d600'/><rect x='506' y='0' width='14' height='48' rx='3.5' fill='#00d600'/><rect x='528' y='0' width='14' height='48' rx='3.5' fill='#00d600'/></svg>
<div class='a' style='left:1207.5px;top:970px;width:182.5px;height:56px;background:#042613;border:2px solid #1d4a2b;border-radius:9px;'></div>
<div class='a' style='left:1227.5px;top:989px;width:18px;height:18px;background:#1ea84f;border-radius:50%;'></div>
<div class='t' style='left:862.4px;top:980.7695px;font-size:33px;color:#e4e4e7;-webkit-text-stroke:0.5px #e4e4e7'>L</div>
<div class='a' style='left:1456px;top:936px;width:610px;height:278px;background:#1b1c1e;border:2px solid #28292c;border-radius:20px;'></div>
<svg style='left:1490px;top:1058px' width='542' height='48' viewBox='0 0 542 48'><rect x='0' y='0' width='14' height='48' rx='3.5' fill='#00d600'/><rect x='22' y='0' width='14' height='48' rx='3.5' fill='#00d600'/><rect x='44' y='0' width='14' height='48' rx='3.5' fill='#00d600'/><rect x='66' y='0' width='14' height='48' rx='3.5' fill='#00d600'/><rect x='88' y='0' width='14' height='48' rx='3.5' fill='#00d600'/><rect x='110' y='0' width='14' height='48' rx='3.5' fill='#00d600'/><rect x='132' y='0' width='14' height='48' rx='3.5' fill='#00d600'/><rect x='154' y='0' width='14' height='48' rx='3.5' fill='#00d600'/><rect x='176' y='0' width='14' height='48' rx='3.5' fill='#00d600'/><rect x='198' y='0' width='14' height='48' rx='3.5' fill='#00d600'/><rect x='220' y='0' width='14' height='48' rx='3.5' fill='#00d600'/><rect x='242' y='0' width='14' height='48' rx='3.5' fill='#00d600'/><rect x='264' y='0' width='14' height='48' rx='3.5' fill='#00d600'/><rect x='286' y='0' width='14' height='48' rx='3.5' fill='#00d600'/><rect x='308' y='0' width='14' height='48' rx='3.5' fill='#00d600'/><rect x='330' y='0' width='14' height='48' rx='3.5' fill='#00d600'/><rect x='352' y='0' width='14' height='48' rx='3.5' fill='#00d600'/><rect x='374' y='0' width='14' height='48' rx='3.5' fill='#00d600'/><rect x='396' y='0' width='14' height='48' rx='3.5' fill='#00d600'/><rect x='418' y='0' width='14' height='48' rx='3.5' fill='#00d600'/><rect x='440' y='0' width='14' height='48' rx='3.5' fill='#00d600'/><rect x='462' y='0' width='14' height='48' rx='3.5' fill='#00d600'/><rect x='484' y='0' width='14' height='48' rx='3.5' fill='#00d600'/><rect x='506' y='0' width='14' height='48' rx='3.5' fill='#00d600'/><rect x='528' y='0' width='14' height='48' rx='3.5' fill='#00d600'/></svg>
<div class='a' style='left:1849.5px;top:970px;width:182.5px;height:56px;background:#042613;border:2px solid #1d4a2b;border-radius:9px;'></div>
<div class='a' style='left:1869.5px;top:989px;width:18px;height:18px;background:#1ea84f;border-radius:50%;'></div>
<svg style='left:1490px;top:974px;' width='48' height='48' viewBox='0 0 48 48'><circle cx='24' cy='24' r='24' fill='#f35c49'/><path d='M14 13 H34 L24 29.5 Z' fill='#1c1c1e'/><rect x='14' y='31' width='20.5' height='3.8' fill='#1c1c1e'/></svg>
<div class='a' style='left:2098px;top:936px;width:610px;height:278px;background:#1b1c1e;border:2px solid #28292c;border-radius:20px;'></div>
<svg style='left:2132px;top:1058px' width='542' height='48' viewBox='0 0 542 48'><rect x='0' y='0' width='14' height='48' rx='3.5' fill='#d4d400'/><rect x='22' y='0' width='14' height='48' rx='3.5' fill='#d4d400'/><rect x='44' y='0' width='14' height='48' rx='3.5' fill='#d4d400'/><rect x='66' y='0' width='14' height='48' rx='3.5' fill='#d4d400'/><rect x='88' y='0' width='14' height='48' rx='3.5' fill='#d4d400'/><rect x='110' y='0' width='14' height='48' rx='3.5' fill='#d4d400'/><rect x='132' y='0' width='14' height='48' rx='3.5' fill='#d4d400'/><rect x='154' y='0' width='14' height='48' rx='3.5' fill='#d4d400'/><rect x='176' y='0' width='14' height='48' rx='3.5' fill='#d4d400'/><rect x='198' y='0' width='14' height='48' rx='3.5' fill='#d4d400'/><rect x='220' y='0' width='14' height='48' rx='3.5' fill='#d4d400'/><rect x='242' y='0' width='14' height='48' rx='3.5' fill='#d4d400'/><rect x='264' y='0' width='14' height='48' rx='3.5' fill='#d4d400'/><rect x='286' y='0' width='14' height='48' rx='3.5' fill='#d4d400'/><rect x='308' y='0' width='14' height='48' rx='3.5' fill='#d4d400'/><rect x='330' y='0' width='14' height='48' rx='3.5' fill='#d4d400'/><rect x='352' y='0' width='14' height='48' rx='3.5' fill='#d4d400'/><rect x='374' y='0' width='14' height='48' rx='3.5' fill='#d4d400'/><rect x='396' y='0' width='14' height='48' rx='3.5' fill='#d4d400'/><rect x='418' y='0' width='14' height='48' rx='3.5' fill='#d4d400'/><rect x='440' y='0' width='14' height='48' rx='3.5' fill='#d4d400'/><rect x='462' y='0' width='14' height='48' rx='3.5' fill='#d4d400'/><rect x='484' y='0' width='14' height='48' rx='3.5' fill='#d4d400'/><rect x='506' y='0' width='14' height='48' rx='3.5' fill='#d4d400'/><rect x='528' y='0' width='14' height='48' rx='3.5' fill='#d4d400'/></svg>
<div class='a' style='left:2483px;top:970px;width:191px;height:56px;background:#43210a;border:2px solid #70431a;border-radius:9px;'></div>
<div class='a' style='left:2503px;top:989px;width:18px;height:18px;background:#fde047;border-radius:50%;'></div>
<svg style='left:2132px;top:974px;' width='48' height='48' viewBox='0 0 48 48'><rect x='23.40' y='0.90' width='3.2' height='3.2' fill='#34557f'/><rect x='31.44' y='2.54' width='3.2' height='3.2' fill='#34557f'/><rect x='38.25' y='7.20' width='3.2' height='3.2' fill='#34557f'/><rect x='42.80' y='14.17' width='3.2' height='3.2' fill='#34557f'/><rect x='44.40' y='22.40' width='3.2' height='3.2' fill='#34557f'/><rect x='42.80' y='30.63' width='3.2' height='3.2' fill='#34557f'/><rect x='38.25' y='37.60' width='3.2' height='3.2' fill='#34557f'/><rect x='31.44' y='42.26' width='3.2' height='3.2' fill='#34557f'/><rect x='23.40' y='43.90' width='3.2' height='3.2' fill='#34557f'/><rect x='15.36' y='42.26' width='3.2' height='3.2' fill='#34557f'/><rect x='8.55' y='37.60' width='3.2' height='3.2' fill='#34557f'/><rect x='4.00' y='30.63' width='3.2' height='3.2' fill='#34557f'/><rect x='2.40' y='22.40' width='3.2' height='3.2' fill='#34557f'/><rect x='4.00' y='14.17' width='3.2' height='3.2' fill='#34557f'/><rect x='8.55' y='7.20' width='3.2' height='3.2' fill='#34557f'/><rect x='15.36' y='2.54' width='3.2' height='3.2' fill='#34557f'/><path d='M13.3 7 H20.3 L17.6 20.5 C17 24.5 19.3 26.5 22.3 26.5 C25.8 26.5 28 24 28.7 20.5 L31.4 7 H37.8 L34.6 24 C34.3 25.6 34.2 27.7 33.8 29.5 L33 34 H27.6 L27.9 31.5 C26.3 33.3 23.8 34.5 21.3 34.5 C19.3 34.5 17.9 34 16.9 33 L15.2 41.5 H7.3 Z' fill='#4b82dd' stroke='#0a1530' stroke-width='0.8'/></svg>
<div class='a' style='left:1304px;top:1246px;width:78px;height:71px;border:2px solid #2c2d30;border-radius:10px;'></div>
<div class='a' style='left:2827px;top:127px;width:6px;height:1252px;background:#727375;border-radius:3px;'></div>
<div class='a' style='left:44px;top:1420px;width:60px;height:60px;border:2px solid #47484b;border-radius:50%;background:#1c1d20;'></div>
<div class='a' style='left:2344px;top:1392px;width:476px;height:72px;background:#000;border-radius:16px;'></div>
<div class='a' style='left:2442px;top:1412px;width:64px;height:32px;background:#444;border-radius:16px;'></div>
<div class='a' style='left:2446px;top:1416px;width:24px;height:24px;background:#fff;border-radius:50%;'></div>
<div class='a' style='left:2709px;top:1404px;width:99px;height:48px;background:#555;border-radius:24px;'></div>
<svg style='left:2431.7px;top:47.6px;' width='40' height='40' viewBox='0 0 24 24'><path fill='#e4e4e7' d='M20.317 4.3698a19.7913 19.7913 0 00-4.8851-1.5152.0741.0741 0 00-.0785.0371c-.211.3753-.4447.8648-.6083 1.2495-1.8447-.2762-3.68-.2762-5.4868 0-.1636-.3933-.4058-.8742-.6177-1.2495a.077.077 0 00-.0785-.037 19.7363 19.7363 0 00-4.8852 1.515.0699.0699 0 00-.0321.0277C.5334 9.0458-.319 13.5799.0992 18.0578a.0824.0824 0 00.0312.0561c2.0528 1.5076 4.0413 2.4228 5.9929 3.0294a.0777.0777 0 00.0842-.0276c.4616-.6304.8731-1.2952 1.226-1.9942a.076.076 0 00-.0416-.1057c-.6528-.2476-1.2743-.5495-1.8722-.8923a.077.077 0 01-.0076-.1277c.1258-.0943.2517-.1923.3718-.2914a.0743.0743 0 01.0776-.0105c3.9278 1.7933 8.18 1.7933 12.0614 0a.0739.0739 0 01.0785.0095c.1202.099.246.1981.3728.2924a.077.077 0 01-.0066.1276 12.2986 12.2986 0 01-1.873.8914.0766.0766 0 00-.0407.1067c.3604.698.7719 1.3628 1.225 1.9932a.076.076 0 00.0842.0286c1.961-.6067 3.9495-1.5219 6.0023-3.0294a.077.077 0 00.0313-.0552c.5004-5.177-.8382-9.6739-3.5485-13.6604a.061.061 0 00-.0312-.0286zM8.02 15.3312c-1.1825 0-2.1569-1.0857-2.1569-2.419 0-1.3332.9555-2.4189 2.157-2.4189 1.2108 0 2.1757 1.0952 2.1568 2.419 0 1.3332-.9555 2.4189-2.1569 2.4189zm7.9748 0c-1.1825 0-2.1569-1.0857-2.1569-2.419 0-1.3332.9554-2.4189 2.1569-2.4189 1.2108 0 2.1757 1.0952 2.1568 2.419 0 1.3332-.946 2.4189-2.1568 2.4189Z'/></svg>
<svg style='left:2512px;top:47.5px;' width='40' height='40' viewBox='0 0 24 24'><path fill='#e4e4e7' d='M12 .297c-6.63 0-12 5.373-12 12 0 5.303 3.438 9.8 8.205 11.385.6.113.82-.258.82-.577 0-.285-.01-1.04-.015-2.04-3.338.724-4.042-1.61-4.042-1.61C4.422 18.07 3.633 17.7 3.633 17.7c-1.087-.744.084-.729.084-.729 1.205.084 1.838 1.236 1.838 1.236 1.07 1.835 2.809 1.305 3.495.998.108-.776.417-1.305.76-1.605-2.665-.3-5.466-1.332-5.466-5.93 0-1.31.465-2.38 1.235-3.22-.135-.303-.54-1.523.105-3.176 0 0 1.005-.322 3.3 1.23.96-.267 1.98-.399 3-.405 1.02.006 2.04.138 3 .405 2.28-1.552 3.285-1.23 3.285-1.23.645 1.653.24 2.873.12 3.176.765.84 1.23 1.91 1.23 3.22 0 4.61-2.805 5.625-5.475 5.92.42.36.81 1.096.81 2.22 0 1.606-.015 2.896-.015 3.286 0 .315.21.69.825.57C20.565 22.092 24 17.592 24 12.297c0-6.627-5.373-12-12-12'/></svg>
<svg style='left:2587.6px;top:47.1px;' width='42.5' height='42.5' viewBox='0 0 24 24'><path fill='#fafafa' d='M9.528 1.718a.75.75 0 01.162.819A8.97 8.97 0 009 6a9 9 0 009 9 8.97 8.97 0 003.463-.69.75.75 0 01.981.98 10.503 10.503 0 01-9.694 6.46c-5.799 0-10.5-4.701-10.5-10.5 0-4.368 2.667-8.112 6.46-9.694a.75.75 0 01.818.162z'/></svg>
<svg style='left:2660px;top:44px;' width='52' height='48' viewBox='0 0 52 48'><path fill='#e4e4e7' d='M20.2,7.1 H10 A6 6 0 0 0 4 13.1 V34.4 A6 6 0 0 0 10 40.4 H20.2 V34.6 H11.5 A1.5 1.5 0 0 1 10 33.1 V14.4 A1.5 1.5 0 0 1 11.5 12.9 H20.2 Z'/><path fill='#e4e4e7' d='M15 19.7 A1.5 1.5 0 0 1 16.5 18.2 H30 V29.7 H16.5 A1.5 1.5 0 0 1 15 28.2 Z'/><path fill='#e4e4e7' stroke='#e4e4e7' stroke-width='2' stroke-linejoin='round' d='M29.8,8.9 L46.3,24.1 L29.8,39.4 Z'/></svg>
<svg style='left:211.9px;top:221.8px;' width='27.96' height='27.96' viewBox='0 0 24 24'><g fill='none' stroke='#e4e4e7' stroke-width='2.15' stroke-linecap='round' stroke-linejoin='round'><path d='M19 14c1.49-1.46 3-3.21 3-5.5A5.5 5.5 0 0 0 16.5 3c-1.76 0-3 .5-4.5 2-1.5-1.5-2.74-2-4.5-2A5.5 5.5 0 0 0 2 8.5c0 2.3 1.5 4.05 3 5.5l7 7Z'/><path d='M3.22 12H9.5l.5-1 2 4.5 2-7 1.5 3.5h5.27'/></g></svg>
<svg style='left:415px;top:222px;' width='27.7' height='27.7' viewBox='0 0 24 24'><g fill='none' stroke='#a1a1aa' stroke-width='2.25' stroke-linecap='round' stroke-linejoin='round'><rect x='4' y='4' width='16' height='16' rx='2'/><rect x='9' y='9' width='6' height='6' rx='1'/><path d='M15 2v2M15 20v2M2 15h2M2 9h2M20 15h2M20 9h2M9 2v2M9 20v2'/></g></svg>
<svg style='left:690px;top:216px;' width='40' height='40' viewBox='690 216 40 40'><g fill='none' stroke='#8a8b90' stroke-linecap='round'><circle cx='707.5' cy='233.5' r='8.5' stroke-width='4.2'/><path d='M714.5 240.5 L721.5 247.5' stroke-width='4.8'/></g></svg>
<svg style='left:1224px;top:216px;' width='40' height='40' viewBox='1224 216 40 40'><g stroke='#e4e4e7' stroke-width='3' stroke-linecap='round'><path d='M1231.5 236.1 H1256'/><path d='M1243.7 224 V248.3'/></g></svg>
<svg style='left:1496px;top:220.2px;' width='32.4' height='32.4' viewBox='0 0 24 24'><g fill='none' stroke='#e4e4e7' stroke-width='1.95' stroke-linecap='round' stroke-linejoin='round'><path d='M12.22 2h-.44a2 2 0 0 0-2 2v.18a2 2 0 0 1-1 1.73l-.43.25a2 2 0 0 1-2 0l-.15-.08a2 2 0 0 0-2.73.73l-.22.38a2 2 0 0 0 .73 2.73l.15.1a2 2 0 0 1 1 1.72v.51a2 2 0 0 1-1 1.74l-.15.09a2 2 0 0 0-.73 2.73l.22.38a2 2 0 0 0 2.73.73l.15-.08a2 2 0 0 1 2 0l.43.25a2 2 0 0 1 1 1.73V20a2 2 0 0 0 2 2h.44a2 2 0 0 0 2-2v-.18a2 2 0 0 1 1-1.73l.43-.25a2 2 0 0 1 2 0l.15.08a2 2 0 0 0 2.73-.73l.22-.39a2 2 0 0 0-.73-2.73l-.15-.08a2 2 0 0 1-1-1.74v-.5a2 2 0 0 1 1-1.74l.15-.09a2 2 0 0 0 .73-2.73l-.22-.38a2 2 0 0 0-2.73-.73l-.15.08a2 2 0 0 1-2 0l-.43-.25a2 2 0 0 1-1-1.73V4a2 2 0 0 0-2-2z'/><circle cx='12' cy='12' r='3'/></g></svg>
<svg style='left:1150px;top:1264px;' width='80' height='36' viewBox='1150 1264 80 36'><path d='M1169 1271.8 L1158.6 1282 L1169 1292.2' fill='none' stroke='#e4e4e7' stroke-width='2.6' stroke-linecap='round' stroke-linejoin='round'/></svg>
<svg style='left:1700px;top:1264px;' width='30' height='36' viewBox='1700 1264 30 36'><path d='M1710.5 1271.8 L1720.9 1282 L1710.5 1292.2' fill='none' stroke='#e4e4e7' stroke-width='2.6' stroke-linecap='round' stroke-linejoin='round'/></svg>
<svg style='left:50px;top:1426px;' width='48' height='48' viewBox='50 1426 48 48'><path d='M74 1435 V1446.3 H85 L74.8 1465.2 V1453.7 H63.5 Z' fill='none' stroke='#ffffff' stroke-width='3.2' stroke-linejoin='miter' stroke-miterlimit='2.2'/></svg>
<svg style='left:2364px;top:1408px;' width='40' height='40' viewBox='2364 1408 40 40'><defs><mask id='rsm'><rect x='2364' y='1408' width='40' height='40' fill='#fff'/><path d='M2380 1424 L2400 1431 L2392 1435 L2388 1446 L2380 1446 Z' fill='#000'/></mask></defs><rect x='2371.3' y='1416.3' width='23.4' height='23.4' rx='3' fill='none' stroke='#9a9a9a' stroke-width='2.6' stroke-dasharray='4.2 3.6' mask='url(#rsm)'/><path d='M2384 1428 L2396 1432.5 L2390.5 1434.5 L2388.2 1440.2 Z' fill='none' stroke='#9a9a9a' stroke-width='2.4' stroke-linejoin='round'/></svg>
<div class='t' id='nav1' style='left:791.00px;top:50.64px;font-size:33.5px;color:#e4e4e7;font-weight:400;letter-spacing:0.250px;font-family:"Liberation Sans";-webkit-text-stroke:0.85px #e4e4e7;'>Dashboard</div>
<div class='t' id='nav2' style='left:1004.70px;top:50.64px;font-size:33.5px;color:#e4e4e7;font-weight:400;letter-spacing:0.333px;font-family:"Liberation Sans";-webkit-text-stroke:0.85px #e4e4e7;'>Config Editor</div>
<div class='t' id='nav3' style='left:1250.80px;top:50.64px;font-size:33.5px;color:#e4e4e7;font-weight:400;letter-spacing:0.167px;font-family:"Liberation Sans";-webkit-text-stroke:0.85px #e4e4e7;'>Proxies</div>
<div class='t' id='nav4' style='left:1411.50px;top:50.64px;font-size:33.5px;color:#86efac;font-weight:400;letter-spacing:1.333px;font-family:"Liberation Sans";-webkit-text-stroke:0.85px #86efac;'>Metrics</div>
<div class='t' id='nav5' style='left:1573.40px;top:50.64px;font-size:33.5px;color:#e4e4e7;font-weight:400;letter-spacing:0.400px;font-family:"Liberation Sans";-webkit-text-stroke:0.85px #e4e4e7;'>Docker</div>
<div class='t' id='nav6' style='left:1730.70px;top:50.64px;font-size:33.5px;color:#e4e4e7;font-weight:400;letter-spacing:0.333px;font-family:"Liberation Sans";-webkit-text-stroke:0.85px #e4e4e7;'>Docs</div>
<div class='t' id='tb1' style='left:255.00px;top:221.03px;font-size:29.5px;color:#e4e4e7;font-weight:400;letter-spacing:0.400px;font-family:"Liberation Sans";-webkit-text-stroke:0.75px #e4e4e7;'>Uptime</div>
<div class='t' id='tb2' style='left:459.00px;top:221.03px;font-size:29.5px;color:#a1a1aa;font-weight:400;letter-spacing:0.100px;font-family:"Liberation Sans";-webkit-text-stroke:0.75px #a1a1aa;'>System Info</div>
<div class='t' id='tb3' style='left:741.00px;top:221.03px;font-size:29.5px;color:#8e8f95;font-weight:400;letter-spacing:-0.500px;font-family:"Liberation Sans";-webkit-text-stroke:0.55px #8e8f95;'>Filter...</div>
<div class='t' id='tb4' style='left:1280.00px;top:221.03px;font-size:29.5px;color:#e4e4e7;font-weight:400;letter-spacing:0.000px;font-family:"Liberation Sans";-webkit-text-stroke:0.75px #e4e4e7;'>Add agent</div>
<div class='t' id='tb5' style='left:1544.50px;top:221.03px;font-size:29.5px;color:#e4e4e7;font-weight:400;letter-spacing:0.000px;font-family:"Liberation Sans";-webkit-text-stroke:0.75px #e4e4e7;'>View</div>
<div class='t' id='tr1' style='left:2217.00px;top:221.90px;font-size:28px;color:#fafafa;font-weight:400;letter-spacing:0.000px;font-family:"Liberation Sans";-webkit-text-stroke:0.9px #fafafa;'>5m</div>
<div class='t' id='tr2' style='left:2320.90px;top:221.90px;font-size:28px;color:#fafafa;font-weight:400;letter-spacing:0.000px;font-family:"Liberation Sans";-webkit-text-stroke:0.9px #fafafa;'>15m</div>
<div class='t' id='tr3' style='left:2437.90px;top:221.90px;font-size:28px;color:#fafafa;font-weight:400;letter-spacing:0.000px;font-family:"Liberation Sans";-webkit-text-stroke:0.9px #fafafa;'>1h</div>
<div class='t' id='tr4' style='left:2529.90px;top:221.90px;font-size:28px;color:#fafafa;font-weight:400;letter-spacing:0.000px;font-family:"Liberation Sans";-webkit-text-stroke:0.9px #fafafa;'>1d</div>
<div class='t' id='tr5' style='left:2621.70px;top:221.90px;font-size:28px;color:#fafafa;font-weight:400;letter-spacing:0.000px;font-family:"Liberation Sans";-webkit-text-stroke:0.9px #fafafa;'>1mo</div>
<div class='t' id='c0t' style='left:268.60px;top:363.23px;font-size:29.5px;color:#fafafa;font-weight:400;letter-spacing:0.129px;font-family:"Liberation Sans";-webkit-text-stroke:0.75px #fafafa;'>Fivefilters Full Tex...</div>
<div class='t' id='c0l' style='left:206.70px;top:523.33px;font-size:29.5px;color:#fafafa;font-weight:400;letter-spacing:-0.062px;font-family:"Liberation Sans";-webkit-text-stroke:0.75px #fafafa;'>Avg. Latency: 0ms</div>
<div class='t' id='c0s' style='left:609.40px;top:523.33px;font-size:29.5px;color:#fafafa;font-weight:400;letter-spacing:-1.250px;font-family:"Liberation Sans";-webkit-text-stroke:0.75px #fafafa;'>100% IDLE</div>
<div class='t' id='c0b' style='left:606.00px;top:360.91px;font-size:32px;color:#fde047;font-weight:400;letter-spacing:1.333px;font-family:"Liberation Sans";-webkit-text-stroke:0.6px #fde047;'>napping</div>
<div class='t' id='c1t' style='left:910.60px;top:363.23px;font-size:29.5px;color:#fafafa;font-weight:400;letter-spacing:0.154px;font-family:"Liberation Sans";-webkit-text-stroke:0.75px #fafafa;'>Registry Proxy</div>
<div class='t' id='c1l' style='left:848.70px;top:523.33px;font-size:29.5px;color:#fafafa;font-weight:400;letter-spacing:-0.500px;font-family:"Liberation Sans";-webkit-text-stroke:0.75px #fafafa;'>Avg. Latency: 1ms</div>
<div class='t' id='c1s' style='left:1273.20px;top:523.33px;font-size:29.5px;color:#fafafa;font-weight:400;letter-spacing:-1.167px;font-family:"Liberation Sans";-webkit-text-stroke:0.75px #fafafa;'>100% UP</div>
<div class='t' id='c1b' style='left:1256.50px;top:360.91px;font-size:32px;color:#86efac;font-weight:400;letter-spacing:1.500px;font-family:"Liberation Sans";-webkit-text-stroke:0.6px #86efac;'>healthy</div>
<div class='t' id='c2t' style='left:1553.60px;top:363.23px;font-size:29.5px;color:#fafafa;font-weight:400;letter-spacing:0.071px;font-family:"Liberation Sans";-webkit-text-stroke:0.75px #fafafa;'>Godoxy Frontend</div>
<div class='t' id='c2l' style='left:1490.70px;top:523.33px;font-size:29.5px;color:#fafafa;font-weight:400;letter-spacing:-0.063px;font-family:"Liberation Sans";-webkit-text-stroke:0.75px #fafafa;'>Avg. Latency: 3ms</div>
<div class='t' id='c2s' style='left:1915.20px;top:523.33px;font-size:29.5px;color:#fafafa;font-weight:400;letter-spacing:-1.167px;font-family:"Liberation Sans";-webkit-text-stroke:0.75px #fafafa;'>100% UP</div>
<div class='t' id='c2b' style='left:1898.50px;top:360.91px;font-size:32px;color:#86efac;font-weight:400;letter-spacing:1.500px;font-family:"Liberation Sans";-webkit-text-stroke:0.6px #86efac;'>healthy</div>
<div class='t' id='c3t' style='left:2195.60px;top:363.23px;font-size:29.5px;color:#fafafa;font-weight:400;letter-spacing:0.071px;font-family:"Liberation Sans";-webkit-text-stroke:0.75px #fafafa;'>Godoxy Frontend</div>
<div class='t' id='c3l' style='left:2132.70px;top:523.33px;font-size:29.5px;color:#fafafa;font-weight:400;letter-spacing:-0.062px;font-family:"Liberation Sans";-webkit-text-stroke:0.75px #fafafa;'>Avg. Latency: 0ms</div>
<div class='t' id='c3b' style='left:2517.00px;top:360.91px;font-size:32px;color:#e4e4e7;font-weight:400;letter-spacing:1.667px;font-family:"Liberation Sans";-webkit-text-stroke:0.6px #e4e4e7;'>unknown</div>
<div class='t' id='c4t' style='left:268.60px;top:673.23px;font-size:29.5px;color:#fafafa;font-weight:400;letter-spacing:0.000px;font-family:"Liberation Sans";-webkit-text-stroke:0.75px #fafafa;'>Hoarder</div>
<div class='t' id='c4l' style='left:206.70px;top:833.33px;font-size:29.5px;color:#fafafa;font-weight:400;letter-spacing:-0.062px;font-family:"Liberation Sans";-webkit-text-stroke:0.75px #fafafa;'>Avg. Latency: 0ms</div>
<div class='t' id='c4s' style='left:609.40px;top:833.33px;font-size:29.5px;color:#fafafa;font-weight:400;letter-spacing:-1.250px;font-family:"Liberation Sans";-webkit-text-stroke:0.75px #fafafa;'>100% IDLE</div>
<div class='t' id='c4b' style='left:606.00px;top:670.91px;font-size:32px;color:#fde047;font-weight:400;letter-spacing:1.333px;font-family:"Liberation Sans";-webkit-text-stroke:0.6px #fde047;'>napping</div>
<div class='t' id='c5t' style='left:910.60px;top:673.23px;font-size:29.5px;color:#fafafa;font-weight:400;letter-spacing:-0.083px;font-family:"Liberation Sans";-webkit-text-stroke:0.75px #fafafa;'>Immich Server</div>
<div class='t' id='c5l' style='left:848.70px;top:833.33px;font-size:29.5px;color:#fafafa;font-weight:400;letter-spacing:-0.059px;font-family:"Liberation Sans";-webkit-text-stroke:0.75px #fafafa;'>Avg. Latency: 65ms</div>
<div class='t' id='c5s' style='left:1273.20px;top:833.33px;font-size:29.5px;color:#fafafa;font-weight:400;letter-spacing:-1.167px;font-family:"Liberation Sans";-webkit-text-stroke:0.75px #fafafa;'>100% UP</div>
<div class='t' id='c5b' style='left:1256.50px;top:670.91px;font-size:32px;color:#86efac;font-weight:400;letter-spacing:1.500px;font-family:"Liberation Sans";-webkit-text-stroke:0.6px #86efac;'>healthy</div>
<div class='t' id='c6t' style='left:1552.60px;top:673.23px;font-size:29.5px;color:#fafafa;font-weight:400;letter-spacing:-0.000px;font-family:"Liberation Sans";-webkit-text-stroke:0.75px #fafafa;'>IT Tools</div>
<div class='t' id='c6l' style='left:1490.70px;top:833.33px;font-size:29.5px;color:#fafafa;font-weight:400;letter-spacing:-0.063px;font-family:"Liberation Sans";-webkit-text-stroke:0.75px #fafafa;'>Avg. Latency: 0ms</div>
<div class='t' id='c6s' style='left:1915.20px;top:833.33px;font-size:29.5px;color:#fafafa;font-weight:400;letter-spacing:-1.167px;font-family:"Liberation Sans";-webkit-text-stroke:0.75px #fafafa;'>100% UP</div>
<div class='t' id='c6b' style='left:1898.50px;top:670.91px;font-size:32px;color:#86efac;font-weight:400;letter-spacing:1.500px;font-family:"Liberation Sans";-webkit-text-stroke:0.6px #86efac;'>healthy</div>
<div class='t' id='c7t' style='left:2194.60px;top:673.23px;font-size:29.5px;color:#fafafa;font-weight:400;letter-spacing:-0.250px;font-family:"Liberation Sans";-webkit-text-stroke:0.75px #fafafa;'>Lobe Chat</div>
<div class='t' id='c7l' style='left:2132.70px;top:833.33px;font-size:29.5px;color:#fafafa;font-weight:400;letter-spacing:-0.062px;font-family:"Liberation Sans";-webkit-text-stroke:0.75px #fafafa;'>Avg. Latency: 0ms</div>
<div class='t' id='c7s' style='left:2535.40px;top:833.33px;font-size:29.5px;color:#fafafa;font-weight:400;letter-spacing:-1.250px;font-family:"Liberation Sans";-webkit-text-stroke:0.75px #fafafa;'>100% IDLE</div>
<div class='t' id='c7b' style='left:2532.00px;top:670.91px;font-size:32px;color:#fde047;font-weight:400;letter-spacing:1.333px;font-family:"Liberation Sans";-webkit-text-stroke:0.6px #fde047;'>napping</div>
<div class='t' id='c8t' style='left:268.60px;top:983.23px;font-size:29.5px;color:#fafafa;font-weight:400;letter-spacing:0.200px;font-family:"Liberation Sans";-webkit-text-stroke:0.75px #fafafa;'>Dozzle</div>
<div class='t' id='c8l' style='left:206.70px;top:1143.33px;font-size:29.5px;color:#fafafa;font-weight:400;letter-spacing:-0.062px;font-family:"Liberation Sans";-webkit-text-stroke:0.75px #fafafa;'>Avg. Latency: 0ms</div>
<div class='t' id='c8s' style='left:631.20px;top:1143.33px;font-size:29.5px;color:#fafafa;font-weight:400;letter-spacing:-1.167px;font-family:"Liberation Sans";-webkit-text-stroke:0.75px #fafafa;'>100% UP</div>
<div class='t' id='c8b' style='left:614.50px;top:980.91px;font-size:32px;color:#86efac;font-weight:400;letter-spacing:1.500px;font-family:"Liberation Sans";-webkit-text-stroke:0.6px #86efac;'>healthy</div>
<div class='t' id='c9t' style='left:910.60px;top:983.23px;font-size:29.5px;color:#fafafa;font-weight:400;letter-spacing:0.154px;font-family:"Liberation Sans";-webkit-text-stroke:0.75px #fafafa;'>Registry Proxy</div>
<div class='t' id='c9l' style='left:848.70px;top:1143.33px;font-size:29.5px;color:#fafafa;font-weight:400;letter-spacing:-0.500px;font-family:"Liberation Sans";-webkit-text-stroke:0.75px #fafafa;'>Avg. Latency: 1ms</div>
<div class='t' id='c9s' style='left:1273.20px;top:1143.33px;font-size:29.5px;color:#fafafa;font-weight:400;letter-spacing:-1.167px;font-family:"Liberation Sans";-webkit-text-stroke:0.75px #fafafa;'>100% UP</div>
<div class='t' id='c9b' style='left:1256.50px;top:980.91px;font-size:32px;color:#86efac;font-weight:400;letter-spacing:1.500px;font-family:"Liberation Sans";-webkit-text-stroke:0.6px #86efac;'>healthy</div>
<div class='t' id='c10t' style='left:1552.60px;top:983.23px;font-size:29.5px;color:#fafafa;font-weight:400;letter-spacing:-0.600px;font-family:"Liberation Sans";-webkit-text-stroke:0.75px #fafafa;'>MeTube</div>
<div class='t' id='c10l' style='left:1490.70px;top:1143.33px;font-size:29.5px;color:#fafafa;font-weight:400;letter-spacing:-0.063px;font-family:"Liberation Sans";-webkit-text-stroke:0.75px #fafafa;'>Avg. Latency: 2ms</div>
<div class='t' id='c10s' style='left:1915.20px;top:1143.33px;font-size:29.5px;color:#fafafa;font-weight:400;letter-spacing:-1.167px;font-family:"Liberation Sans";-webkit-text-stroke:0.75px #fafafa;'>100% UP</div>
<div class='t' id='c10b' style='left:1898.50px;top:980.91px;font-size:32px;color:#86efac;font-weight:400;letter-spacing:1.500px;font-family:"Liberation Sans";-webkit-text-stroke:0.6px #86efac;'>healthy</div>
<div class='t' id='c11t' style='left:2194.60px;top:983.23px;font-size:29.5px;color:#fafafa;font-weight:400;letter-spacing:0.286px;font-family:"Liberation Sans";-webkit-text-stroke:0.75px #fafafa;'>MicroBin</div>
<div class='t' id='c11l' style='left:2132.70px;top:1143.33px;font-size:29.5px;color:#fafafa;font-weight:400;letter-spacing:-0.062px;font-family:"Liberation Sans";-webkit-text-stroke:0.75px #fafafa;'>Avg. Latency: 0ms</div>
<div class='t' id='c11s' style='left:2535.40px;top:1143.33px;font-size:29.5px;color:#fafafa;font-weight:400;letter-spacing:-1.250px;font-family:"Liberation Sans";-webkit-text-stroke:0.75px #fafafa;'>100% IDLE</div>
<div class='t' id='c11b' style='left:2532.00px;top:980.91px;font-size:32px;color:#fde047;font-weight:400;letter-spacing:1.333px;font-family:"Liberation Sans";-webkit-text-stroke:0.6px #fde047;'>napping</div>
<div class='t' id='pg1' style='left:1245.40px;top:1268.45px;font-size:29px;color:#e4e4e7;font-weight:400;letter-spacing:0.000px;font-family:"Liberation Sans";-webkit-text-stroke:0.3px #e4e4e7;'>1</div>
<div class='t' id='pg2' style='left:1334.80px;top:1268.45px;font-size:29px;color:#e4e4e7;font-weight:400;letter-spacing:0.000px;font-family:"Liberation Sans";-webkit-text-stroke:0.3px #e4e4e7;'>2</div>
<div class='t' id='pg3' style='left:1427.40px;top:1268.45px;font-size:29px;color:#e4e4e7;font-weight:400;letter-spacing:0.000px;font-family:"Liberation Sans";-webkit-text-stroke:0.3px #e4e4e7;'>3</div>
<div class='t' id='pg4' style='left:1522.30px;top:1268.45px;font-size:29px;color:#e4e4e7;font-weight:400;letter-spacing:0.000px;font-family:"Liberation Sans";-webkit-text-stroke:0.3px #e4e4e7;'>4</div>
<div class='t' id='pg5' style='left:1615.60px;top:1268.45px;font-size:29px;color:#e4e4e7;font-weight:400;letter-spacing:0.000px;font-family:"Liberation Sans";-webkit-text-stroke:0.3px #e4e4e7;'>5</div>
<div class='t' id='ft1' style='left:1230.00px;top:1463.79px;font-size:32.5px;color:#5eead4;font-weight:400;letter-spacing:0.222px;font-family:"Liberation Sans";'>Powered by</div>
<div class='t' id='ft2' style='left:1414.00px;top:1463.79px;font-size:32.5px;color:#86efac;font-weight:400;letter-spacing:-0.200px;font-family:"Liberation Sans";'>GoDoxy</div>
<div class='t' id='ft3' style='left:1545.60px;top:1463.79px;font-size:32.5px;color:#5eead4;font-weight:400;letter-spacing:-0.667px;font-family:"Liberation Sans";'>v0.10.0</div>
<div class='t' id='rs1' style='left:2537.00px;top:1417.91px;font-size:25.5px;color:#ffffff;font-weight:400;letter-spacing:0.333px;font-family:"Liberation Mono";'>react-scan</div>
<div class='t' id='rs2' style='left:2719.60px;top:1418.53px;font-size:23px;color:#ffffff;font-weight:400;letter-spacing:0.000px;font-family:"Liberation Mono";'>120</div>
<div class='t' id='rs3' style='left:2768.00px;top:1423.23px;font-size:14.5px;color:#ffffff;font-weight:400;letter-spacing:0.500px;font-family:"Liberation Mono";'>FPS</div>
</body></html>
